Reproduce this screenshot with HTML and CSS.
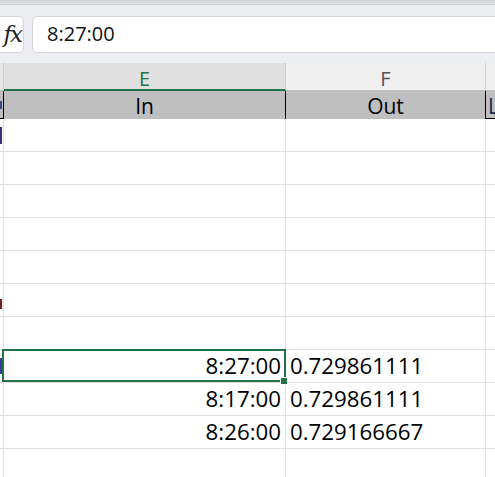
FILE: index.html
```html
<!DOCTYPE html>
<html>
<head>
<meta charset="utf-8">
<link rel="stylesheet" href="styles.css">
</head>
<body>
<div class="topstrip"></div>
<div class="fbar">
  <div class="fxbox"><span class="fx">fx</span></div>
  <div class="finput">8:27:00</div>
</div>
<div class="sheet">
  <div class="row colhdr">
    <div class="c cd"></div>
    <div class="c ce">E</div>
    <div class="c cf">F</div>
    <div class="c cg"></div>
  </div>
  <div class="row hdr">
    <div class="c cd"><span class="mark mark-h"></span></div>
    <div class="c ce">In</div>
    <div class="c cf">Out</div>
    <div class="c cg">L</div>
  </div>
  <div class="row data">
    <div class="c cd"><span class="mark mark-1"></span></div>
    <div class="c ce"></div><div class="c cf"></div><div class="c cg"></div>
  </div>
  <div class="row data">
    <div class="c cd"></div><div class="c ce"></div><div class="c cf"></div><div class="c cg"></div>
  </div>
  <div class="row data">
    <div class="c cd"></div><div class="c ce"></div><div class="c cf"></div><div class="c cg"></div>
  </div>
  <div class="row data">
    <div class="c cd"></div><div class="c ce"></div><div class="c cf"></div><div class="c cg"></div>
  </div>
  <div class="row data">
    <div class="c cd"></div><div class="c ce"></div><div class="c cf"></div><div class="c cg"></div>
  </div>
  <div class="row data">
    <div class="c cd"><span class="mark mark-6"></span></div>
    <div class="c ce"></div><div class="c cf"></div><div class="c cg"></div>
  </div>
  <div class="row data">
    <div class="c cd"></div><div class="c ce"></div><div class="c cf"></div><div class="c cg"></div>
  </div>
  <div class="row data">
    <div class="c cd"><span class="mark mark-8"></span></div>
    <div class="c ce num sel">8:27:00<span class="handle"></span></div>
    <div class="c cf num">0.729861111</div>
    <div class="c cg"></div>
  </div>
  <div class="row data">
    <div class="c cd"></div>
    <div class="c ce num">8:17:00</div>
    <div class="c cf num">0.729861111</div>
    <div class="c cg"></div>
  </div>
  <div class="row data">
    <div class="c cd"></div>
    <div class="c ce num">8:26:00</div>
    <div class="c cf num">0.729166667</div>
    <div class="c cg"></div>
  </div>
  <div class="row data">
    <div class="c cd"></div><div class="c ce"></div><div class="c cf"></div><div class="c cg"></div>
  </div>
</div>
</body>
</html>
```
FILE: styles.css
```css
* { box-sizing: border-box; margin: 0; padding: 0; }
html, body { width: 495px; height: 477px; overflow: hidden; background: #fff; }
body { font-family: "Open Sans", "Noto Sans", sans-serif; color: #000; }

.topstrip {
  height: 5px;
  background: linear-gradient(#d3d4d7, #dfe0e3);
  border-bottom: 1px solid #cfd0d3;
}
.fbar {
  height: 58px;
  display: flex;
  gap: 8px;
  padding: 11px 0 10px 0;
  background: #eceef2;
}
.fxbox {
  flex: none;
  width: 32px;
  margin-left: -8px;
  background: #fff;
  border: 1px solid #d5d6d9;
  border-radius: 5px;
  display: flex;
  align-items: center;
  justify-content: flex-end;
  padding-right: 1px;
}
.fx {
  font-family: "DejaVu Serif", "Liberation Serif", serif;
  font-style: italic;
  font-size: 23px;
  line-height: 27px;
  color: #222;
  letter-spacing: -2px;
  padding-right: 1px;
}
.finput {
  flex: 1;
  margin-right: -10px;
  background: #fff;
  border: 1px solid #d5d6d9;
  border-radius: 5px;
  font-size: 20px;
  line-height: 33px;
  padding-left: 14px;
  color: #111;
}

.sheet { display: flex; flex-direction: column; }
.row { display: flex; }
.c {
  flex: none;
  height: 33px;
  border-right: 1px solid #e1e1e1;
  border-bottom: 1px solid #e1e1e1;
  white-space: nowrap;
  overflow: hidden;
}
.cd { width: 4px; }
.ce { width: 282px; }
.cf { width: 200px; }
.cg { flex: 1; border-right: none; }

.colhdr .c {
  height: 28px;
  background: #efefef;
  border-right-color: #cccccc;
  border-bottom: 1px solid #bdbdbd;
  text-align: center;
  font-size: 20px;
  line-height: 26px;
  padding-top: 3px;
  color: #5a4e55;
}
.colhdr .cd { background: #e6e6e6; }
.colhdr .ce {
  background: #e0e0e0;
  border-bottom: 2px solid #217346;
  color: #217346;
}

.hdr .c {
  height: 28px;
  background: #bfbfbf;
  border-bottom: none;
  border-right: 1px solid #000;
  font-size: 21px;
  line-height: 28px;
  padding-top: 1px;
  text-align: center;
}
.hdr .cd, .hdr .cg { border-bottom: 1px solid #000; }
.hdr .cg { text-align: left; padding-left: 2px; border-right: none; color: #102a50; }

.data .c { font-size: 22.3px; line-height: 32px; }
.ce.num { text-align: right; padding-right: 4px; }
.cf.num { padding-left: 4px; }

.sel { position: relative; overflow: visible; z-index: 2; }
.sel::after {
  content: "";
  position: absolute;
  top: -1px;
  left: -2px;
  right: -1px;
  bottom: 0;
  border: 2px solid #217346;
  pointer-events: none;
}
.handle {
  position: absolute;
  right: -3px;
  bottom: -3px;
  width: 8px;
  height: 8px;
  background: #217346;
  border: 1px solid #fff;
  z-index: 3;
}

.mark { display: block; width: 2px; }
.mark-h { margin-top: 9px; height: 8px; background: #3a4f8a; }
.mark-1 { margin-top: 8px; height: 17px; background: #3b2f86; }
.mark-6 { margin-top: 15px; height: 10px; background: #7a1c1c; }
.mark-8 { margin-top: 8px; height: 16px; background: #3a3a9a; }
```
